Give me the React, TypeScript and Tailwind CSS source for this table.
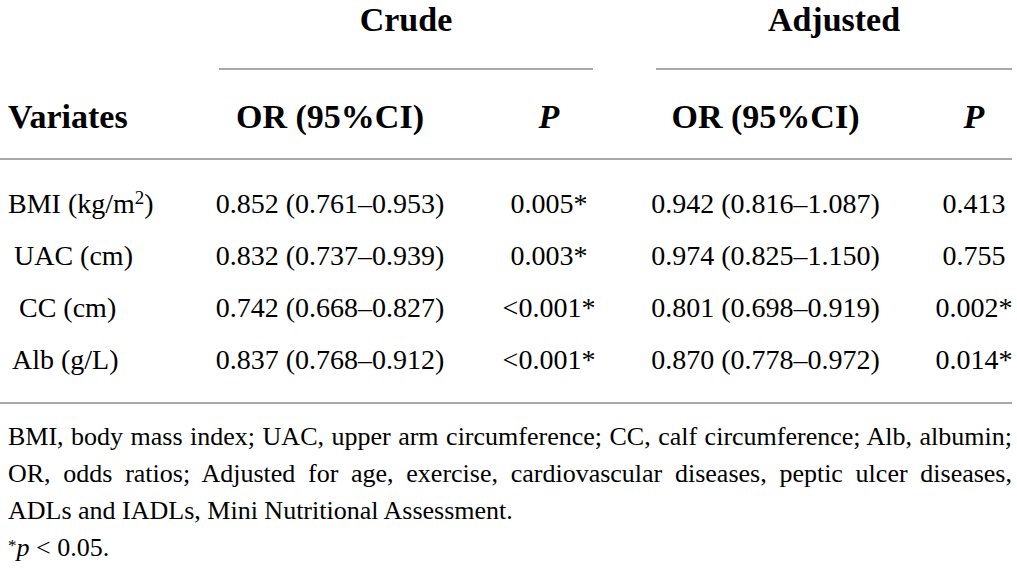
import React from "react";

const serif = { fontFamily: '"Liberation Serif", "Times New Roman", serif' };

const rows = [
  { label: <>BMI (kg/m<sup className="text-[19px]">2</sup>)</>, pl: "pl-[8px]", c1: "0.852 (0.761–0.953)", p1: "0.005*", c2: "0.942 (0.816–1.087)", p2: "0.413" },
  { label: <>UAC (cm)</>, pl: "pl-[14px]", c1: "0.832 (0.737–0.939)", p1: "0.003*", c2: "0.974 (0.825–1.150)", p2: "0.755" },
  { label: <>CC (cm)</>, pl: "pl-[19px]", c1: "0.742 (0.668–0.827)", p1: "<0.001*", c2: "0.801 (0.698–0.919)", p2: "0.002*" },
  { label: <>Alb (g/L)</>, pl: "pl-[12px]", c1: "0.837 (0.768–0.912)", p1: "<0.001*", c2: "0.870 (0.778–0.972)", p2: "0.014*" },
];

export default function App() {
  return (
    <div className="w-[1017px] h-[568px] bg-white text-black overflow-hidden" style={serif}>
      {/* group header */}
      <div className="flex">
        <div className="ml-[219px] w-[374px] flex flex-col items-center">
          <div className="text-[34px] font-bold leading-[40px]">Crude</div>
          <div className="mt-[28px] h-[2px] w-full bg-[#a8a8a8]" />
        </div>
        <div className="ml-[63px] w-[356px] flex flex-col items-center">
          <div className="text-[34px] font-bold leading-[40px]">Adjusted</div>
          <div className="mt-[28px] h-[2px] w-full bg-[#a8a8a8]" />
        </div>
      </div>

      {/* column header */}
      <div className="grid grid-cols-[162px_336px_102px_331px_86px] h-[88px] pt-[4px] items-center text-[34px] font-bold">
        <div className="pl-[8px]">Variates</div>
        <div className="text-center">OR (95%CI)</div>
        <div className="text-center italic">P</div>
        <div className="text-center">OR (95%CI)</div>
        <div className="text-center italic">P</div>
      </div>
      <div className="h-[2px] w-[1012px] bg-[#a8a8a8]" />

      {/* body */}
      <div className="pt-[18px] pb-[16px] text-[28px]">
        {rows.map((r, i) => (
          <div key={i} className="grid grid-cols-[162px_336px_102px_331px_86px] h-[52px] items-center leading-[52px]">
            <div className={`${r.pl} whitespace-nowrap`}>{r.label}</div>
            <div className="text-center whitespace-nowrap">{r.c1}</div>
            <div className="text-center whitespace-nowrap">{r.p1}</div>
            <div className="text-center whitespace-nowrap">{r.c2}</div>
            <div className="text-center whitespace-nowrap">{r.p2}</div>
          </div>
        ))}
      </div>
      <div className="h-[2px] w-[1012px] bg-[#a8a8a8]" />

      {/* footnote */}
      <div className="pt-[14px] pl-[8px] w-[1012px] text-[26px] leading-[37px]">
        <div className="text-justify [text-align-last:justify] whitespace-nowrap">
          BMI, body mass index; UAC, upper arm circumference; CC, calf circumference; Alb, albumin;
        </div>
        <div className="text-justify [text-align-last:justify]">
          OR, odds ratios; Adjusted for age, exercise, cardiovascular diseases, peptic ulcer diseases,
        </div>
        <div>ADLs and IADLs, Mini Nutritional Assessment.</div>
        <div>
          <sup className="text-[17px] top-[-0.3em]">*</sup>
          <span className="italic">p</span> &lt; 0.05.
        </div>
      </div>
    </div>
  );
}
